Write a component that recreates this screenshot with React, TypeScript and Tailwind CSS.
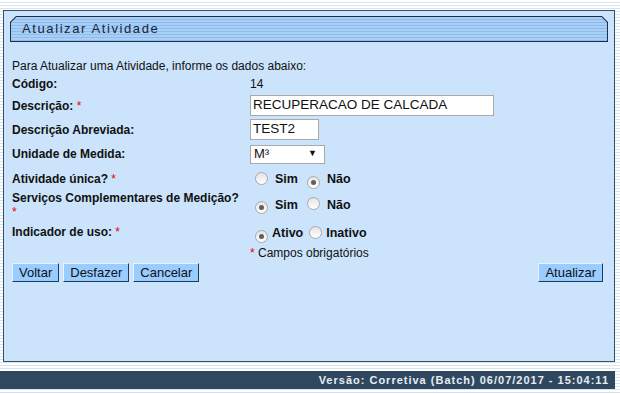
import React from "react"

const font = { fontFamily: '"Liberation Sans", Arial, sans-serif' }

// Radio drawn by hand: the reference uses the old grey Windows style
function Radio({ checked }: { checked?: boolean }) {
  return (
    <span className="inline-flex h-[13px] w-[13px] shrink-0 items-center justify-center rounded-full border border-[#a9a9a9] bg-[linear-gradient(to_bottom,#e4e4e4,#ffffff)]">
      {checked && <span className="h-[5px] w-[5px] rounded-full bg-[#5f5f5f]" />}
    </span>
  )
}

function RadioGroup({ options, selected, spaced }: { options: string[]; selected: number; spaced?: boolean }) {
  return (
    <div className="flex items-center">
      {options.map((o, i) => (
        <label key={o} className="flex items-center">
          <span className={i === 0 ? "ml-[5px]" : spaced ? "ml-[9px]" : "ml-[6px]"}>
            <Radio checked={i === selected} />
          </span>
          <span className={`${spaced ? "ml-[7px]" : "ml-[4px]"} text-[12.5px] font-bold text-[#111]`}>{o}</span>
        </label>
      ))}
    </div>
  )
}

function Button({ children }: { children: React.ReactNode }) {
  return (
    <button className="h-[19px] border border-t-[#e8f2fc] border-l-[#e8f2fc] border-r-[#1e3a58] border-b-[#1e3a58] bg-[#99ccff] px-[6px] text-[13px] leading-none text-[#111]">
      {children}
    </button>
  )
}

function Row({ label, req, h, children, top }: { label: React.ReactNode; req?: boolean; h: string; children?: React.ReactNode; top?: boolean }) {
  return (
    <div className={`flex ${h} ${top ? "items-stretch" : "items-center"}`}>
      <div className={`w-[238px] text-[12px] font-bold text-[#111] ${top ? "leading-[14px]" : ""}`}>
        {label}
        {req && <span className="font-normal text-[#e00]"> *</span>}
      </div>
      <div className="flex items-center">{children}</div>
    </div>
  )
}

export default function App() {
  return (
    <div
      className="relative h-[394px] w-[620px] overflow-hidden bg-[repeating-linear-gradient(to_bottom,#ffffff_0px,#ffffff_2px,#d6e2ec_2px,#d6e2ec_3px)]"
      style={font}
    >
      <div className="h-[10px]" />
      {/* main panel */}
      <div className="ml-[3px] h-[352px] w-[612px] border border-[#36506b] bg-[#cbe3fb] pl-[8px] pr-[11px]">
        {/* title bar */}
        <div className="ml-[-2px] mr-[-5px] mt-[5px] h-[26px] bg-[#1c2f45] p-px [clip-path:polygon(6px_0,calc(100%-6px)_0,100%_6px,100%_100%,0_100%,0_6px)]">
          <div className="flex h-full items-center bg-[repeating-linear-gradient(to_bottom,#a9cff6_0px,#a9cff6_2px,#8dbcec_2px,#8dbcec_3px)] pl-[11px] [clip-path:polygon(5.5px_0,calc(100%-5.5px)_0,100%_5.5px,100%_100%,0_100%,0_5.5px)]">
            <span className="text-[13px] tracking-[1.6px] text-[#14263a]">Atualizar Atividade</span>
          </div>
        </div>

        <div className="mt-[15px] flex h-[17px] items-center text-[12px] text-[#111]">
          Para Atualizar uma Atividade, informe os dados abaixo:
        </div>

        <Row label="Código:" h="h-[20px]">
          <span className="text-[12px] text-[#111]">14</span>
        </Row>

        <Row label="Descrição:" req h="h-[23px]">
          <div className="flex h-[21px] w-[244px] items-center border border-[#a9a9a9] bg-white px-[2px] text-[13.5px] text-[#111]">
            RECUPERACAO DE CALCADA
          </div>
        </Row>

        <Row label="Descrição Abreviada:" h="h-[25px]">
          <div className="flex h-[21px] w-[69px] items-center border border-[#a9a9a9] bg-white px-[2px] text-[13.5px] text-[#111]">
            TEST2
          </div>
        </Row>

        <Row label="Unidade de Medida:" h="h-[24px]">
          <div className="flex h-[19px] w-[75px] items-center justify-between border border-[#a9a9a9] bg-white pl-[3px] pr-[7px] text-[13px] text-[#111]">
            <span>M³</span>
            <span className="text-[9px]">▼</span>
          </div>
        </Row>

        <Row label="Atividade única?" req h="h-[25px]">
          <div className="mt-[2px]">
            <RadioGroup options={["Sim", "Não"]} selected={1} spaced />
          </div>
        </Row>

        <Row
          label={
            <div>
              Serviços Complementares de Medição?
              <div className="font-normal text-[#e00]">*</div>
            </div>
          }
          h="h-[28px]"
          top
        >
          <RadioGroup options={["Sim", "Não"]} selected={0} spaced />
        </Row>

        <Row label="Indicador de uso:" req h="h-[26px]">
          <div className="mt-[3px]">
            <RadioGroup options={["Ativo", "Inativo"]} selected={0} />
          </div>
        </Row>

        <div className="flex h-[16px] items-center pl-[238px] text-[12px] text-[#111]">
          <span className="text-[#e00]">*</span>&nbsp;Campos obrigatórios
        </div>

        <div className="mt-[2px] flex items-center justify-between">
          <div className="flex gap-[4px]">
            <Button>Voltar</Button>
            <Button>Desfazer</Button>
            <Button>Cancelar</Button>
          </div>
          <Button>Atualizar</Button>
        </div>
      </div>

      {/* version footer */}
      <div className="mt-[9px] flex h-[18px] w-[615px] items-center justify-end bg-[#2f4860] pr-[6px]">
        <span className="text-[11px] font-bold tracking-[1px] text-[#e6edf4]">
          Versão: Corretiva (Batch) 06/07/2017 - 15:04:11
        </span>
      </div>
    </div>
  )
}
